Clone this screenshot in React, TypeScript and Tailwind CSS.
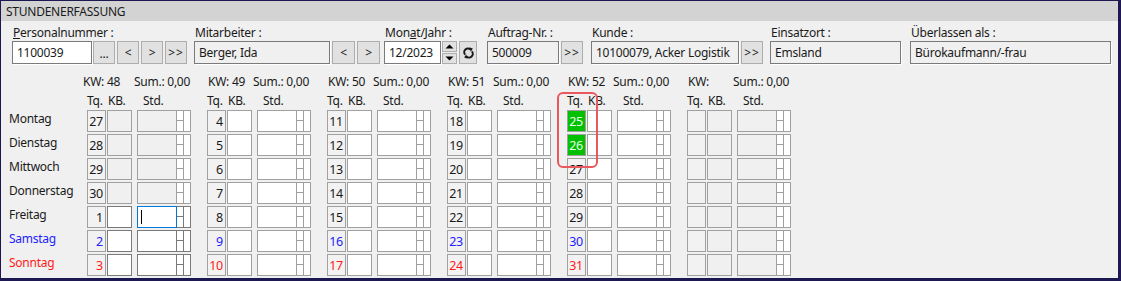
import React from "react";

const DAYS = ["Montag", "Dienstag", "Mittwoch", "Donnerstag", "Freitag", "Samstag", "Sonntag"];

type Block = {
  kw: string;
  days: (number | null)[];
  disabled: boolean[];
  dark: boolean[];
  green: boolean[];
};

const range = (a: number) => Array.from({ length: 7 }, (_, i) => a + i);

const BLOCKS: Block[] = [
  {
    kw: "48",
    days: [27, 28, 29, 30, 1, 2, 3],
    disabled: [true, true, true, true, false, false, false],
    dark: [false, false, false, false, true, true, true],
    green: Array(7).fill(false),
  },
  { kw: "49", days: range(4), disabled: Array(7).fill(false), dark: Array(7).fill(false), green: Array(7).fill(false) },
  { kw: "50", days: range(11), disabled: Array(7).fill(false), dark: Array(7).fill(false), green: Array(7).fill(false) },
  { kw: "51", days: range(18), disabled: Array(7).fill(false), dark: Array(7).fill(false), green: Array(7).fill(false) },
  {
    kw: "52",
    days: range(25),
    disabled: Array(7).fill(false),
    dark: Array(7).fill(false),
    green: [true, true, false, false, false, false, false],
  },
  { kw: "", days: Array(7).fill(null), disabled: Array(7).fill(true), dark: Array(7).fill(false), green: Array(7).fill(false) },
];

function Label({ children }: { children: React.ReactNode }) {
  return <div className="h-[16px] leading-[16px] pl-[1px] whitespace-nowrap">{children}</div>;
}

function Field({ w, white, children }: { w: string; white?: boolean; children?: React.ReactNode }) {
  return (
    <div
      className={`${w} h-[23px] border border-[#7a7a7a] ${white ? "bg-white" : "bg-[#f0f0f0]"} pl-[4px] leading-[21px] whitespace-nowrap overflow-hidden shadow-[1px_1px_0_0_#ffffff]`}
    >
      {children}
    </div>
  );
}

function Btn({ w, className = "", children }: { w: string; className?: string; children?: React.ReactNode }) {
  return (
    <div
      className={`${w} h-[23px] border border-[#adadad] bg-[#e1e1e1] flex items-center justify-center leading-none text-[12px] ${className}`}
    >
      {children}
    </div>
  );
}

function SyncIcon() {
  return (
    <svg width="11" height="14" viewBox="0 0 11 14">
      <path d="M2.2 8.6 A3.6 3.6 0 0 1 7.6 3.6" fill="none" stroke="#1a1a1a" strokeWidth="2" />
      <path d="M6.2 1.2 L9.8 2.4 L7.8 5.8 Z" fill="#1a1a1a" />
      <path d="M8.8 5.4 A3.6 3.6 0 0 1 3.4 10.4" fill="none" stroke="#1a1a1a" strokeWidth="2" />
      <path d="M4.8 12.8 L1.2 11.6 L3.2 8.2 Z" fill="#1a1a1a" />
    </svg>
  );
}

function StdField({ disabled, dark, focused }: { disabled: boolean; dark: boolean; focused?: boolean }) {
  const bc = dark ? "border-[#7a7a7a]" : "border-[#a0a0a0]";
  return (
    <div className={`w-[54px] h-[22px] border ${bc} flex`}>
      <div className={`relative flex-1 ${disabled ? "bg-[#f0f0f0]" : "bg-white"}`}>
        {focused && (
          <>
            <div className="absolute -left-[1px] -top-[1px] -bottom-[1px] -right-[1px] border border-[#0078d7]" />
            <div className="absolute left-[3px] top-[3px] w-[1px] h-[14px] bg-black" />
          </>
        )}
      </div>
      <div className={`w-[7px] border-l ${bc} flex flex-col bg-white`}>
        <div className={`h-[10px] border-b ${bc}`} />
        <div className="flex-1" />
      </div>
      <div className={`w-[7px] border-l ${bc} bg-white`} />
    </div>
  );
}

export default function App() {
  return (
    <div className="relative w-[1121px] h-[281px] bg-[#f0f0f0] border-t border-l border-r-[3px] border-b-[3px] border-[#1e1852] font-['Noto_Sans',sans-serif] text-[12px] tracking-[-0.25px] text-[#1a1a1a] overflow-hidden">
      {/* Header */}
      <div className="h-[20px] bg-[#d3d3d3] pl-[5px] pt-[1px] flex items-center leading-none">STUNDENERFASSUNG</div>

      {/* Top fields */}
      <div className="flex pl-[11px] pt-[4px]">
        <div className="flex flex-col">
          <Label>
            <span className="underline">P</span>ersonalnummer :
          </Label>
          <div className="flex">
            <Field w="w-[80px]" white>
              1100039
            </Field>
            <Btn w="w-[22px]" className="ml-[1px] pt-[3px]">...</Btn>
            <Btn w="w-[22px]" className="ml-[2px]">&lt;</Btn>
            <Btn w="w-[22px]" className="ml-[2px]">&gt;</Btn>
            <Btn w="w-[22px]" className="ml-[2px] tracking-[1px]">&gt;&gt;</Btn>
          </div>
        </div>

        <div className="flex flex-col ml-[7px]">
          <Label>Mitarbeiter :</Label>
          <div className="flex">
            <Field w="w-[136px]">Berger, Ida</Field>
            <Btn w="w-[23px]" className="ml-[2px]">&lt;</Btn>
            <Btn w="w-[23px]" className="ml-[2px]">&gt;</Btn>
          </div>
        </div>

        <div className="flex flex-col ml-[4px]">
          <Label>
            Mon<span className="underline">a</span>t/Jahr :
          </Label>
          <div className="flex">
            <Field w="w-[57px]" white>
              12/2023
            </Field>
            <div className="ml-[1px] w-[15px] h-[23px] flex flex-col gap-[1px]">
              <div className="h-[11px] border border-[#adadad] bg-[#e1e1e1] flex items-center justify-center">
                <svg width="9" height="5" viewBox="0 0 9 5">
                  <path d="M0.5 4.5 L4.5 0.5 L8.5 4.5 Z" fill="#000" />
                </svg>
              </div>
              <div className="h-[11px] border border-[#adadad] bg-[#e1e1e1] flex items-center justify-center">
                <svg width="9" height="5" viewBox="0 0 9 5">
                  <path d="M0.5 0.5 L4.5 4.5 L8.5 0.5 Z" fill="#000" />
                </svg>
              </div>
            </div>
            <Btn w="w-[18px]" className="ml-[2px]">
              <SyncIcon />
            </Btn>
          </div>
        </div>

        <div className="flex flex-col ml-[10px]">
          <Label>Auftrag-Nr. :</Label>
          <div className="flex">
            <Field w="w-[72px]">500009</Field>
            <Btn w="w-[22px]" className="ml-[2px] tracking-[1px]">&gt;&gt;</Btn>
          </div>
        </div>

        <div className="flex flex-col ml-[8px]">
          <Label>Kunde :</Label>
          <div className="flex">
            <Field w="w-[148px]">10100079, Acker Logistik</Field>
            <Btn w="w-[22px]" className="ml-[2px] tracking-[1px]">&gt;&gt;</Btn>
          </div>
        </div>

        <div className="flex flex-col ml-[7px]">
          <Label>Einsatzort :</Label>
          <Field w="w-[131px]">Emsland</Field>
        </div>

        <div className="flex flex-col ml-[9px]">
          <Label>Überlassen als :</Label>
          <Field w="w-[201px]">Bürokaufmann/-frau</Field>
        </div>
      </div>

      {/* Week grid */}
      <div className="flex flex-col mt-[10px]">
        {/* KW row */}
        <div className="flex h-[16px] leading-[16px]">
          <div className="w-[86px]" />
          <div className="flex gap-[16px]">
            {BLOCKS.map((b, i) => (
              <div key={i} className="w-[104px] flex whitespace-nowrap">
                <span className={i === 0 ? "w-[51px] ml-[-4px]" : "w-[46px] pl-[1px]"}>KW:{b.kw ? ` ${b.kw}` : ""}</span>
                <span>Sum.: 0,00</span>
              </div>
            ))}
          </div>
        </div>
        {/* Tq row */}
        <div className="flex h-[16px] leading-[16px] mt-[3px]">
          <div className="w-[86px]" />
          <div className="flex gap-[16px]">
            {BLOCKS.map((_, i) => (
              <div key={i} className="w-[104px] flex whitespace-nowrap">
                <span className="w-[21px]">Tq.</span>
                <span className="w-[35px]">KB.</span>
                <span>Std.</span>
              </div>
            ))}
          </div>
        </div>
        {/* Day rows */}
        <div className="flex flex-col gap-[2px] mt-[1px]">
          {DAYS.map((d, r) => {
            const color = r === 5 ? "text-[#2222ff]" : r === 6 ? "text-[#ff1a1a]" : "text-[#1a1a1a]";
            return (
              <div key={d} className="flex h-[22px]">
                <div className={`w-[86px] pl-[8px] leading-[18px] ${color}`}>{d}</div>
                <div className="flex gap-[16px]">
                  {BLOCKS.map((b, i) => {
                    const dis = b.disabled[r];
                    const dark = b.dark[r];
                    const green = b.green[r];
                    return (
                      <div key={i} className="w-[104px] flex">
                        <div
                          className={`w-[19px] h-[22px] border border-[#a0a0a0] text-right pr-[2px] leading-[21px] text-[12.5px] ${
                            green ? "bg-[#00c000] text-[#eaffea]" : `bg-[#f2f2f2] ${color}`
                          }`}
                        >
                          {b.days[r] ?? ""}
                        </div>
                        <div
                          className={`ml-[1px] w-[25px] h-[22px] border ${dark ? "border-[#7a7a7a]" : "border-[#a0a0a0]"} ${
                            dis ? "bg-[#f0f0f0]" : "bg-white"
                          }`}
                        />
                        <div className="ml-[5px]">
                          <StdField disabled={dis} dark={dark} focused={i === 0 && r === 4} />
                        </div>
                      </div>
                    );
                  })}
                </div>
              </div>
            );
          })}
        </div>
      </div>

      {/* Red highlight around KW 52 Tq column */}
      <div className="absolute left-[556px] top-[91px] w-[41px] h-[76px] rounded-[6px] border-2 border-[#e8585c]" />
    </div>
  );
}
